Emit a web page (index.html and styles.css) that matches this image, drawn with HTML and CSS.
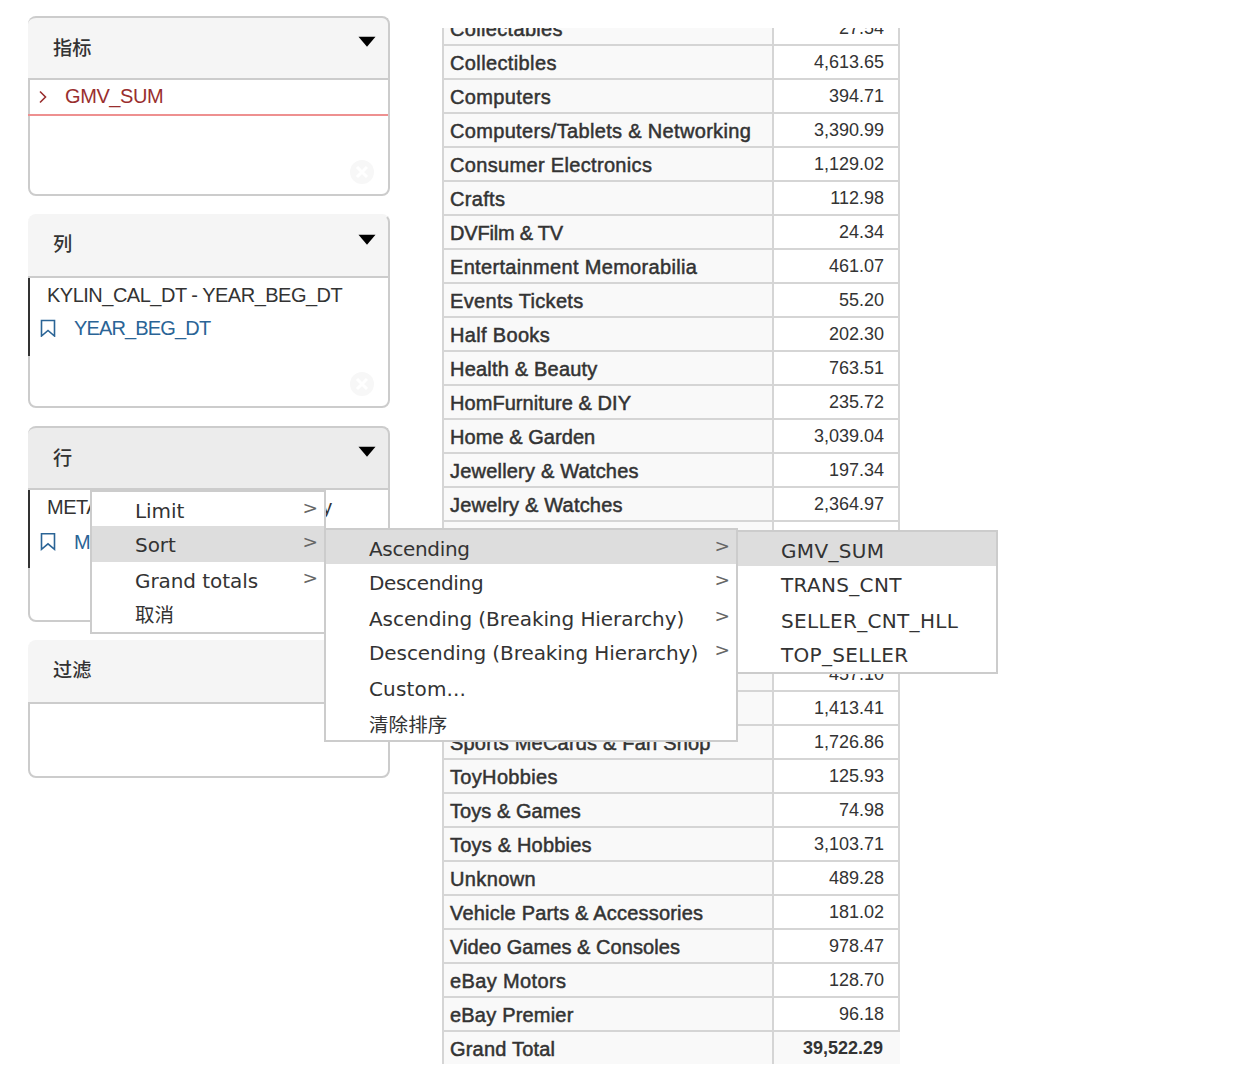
FILE: index.html
```html
<!DOCTYPE html>
<html lang="zh">
<head>
<meta charset="utf-8">
<title>Kylin</title>
<link rel="stylesheet" href="styles.css">
</head>
<body>
<div class="workspace">
  <aside class="sidebar">
    <section class="panel panel-measures">
      <header class="panel-head"><h2>指标</h2><svg class="caret" width="18" height="12" viewBox="0 0 18 12"><path d="M0.5 0.800h17L9 10.800z"/></svg></header>
      <div class="panel-body">
        <div class="measure"><svg width="8" height="12" viewBox="0 0 8 12"><path d="M1 1.500l5.500 5.500L1 12.500"/></svg><span>GMV_SUM</span></div>
        <svg class="clear" width="24" height="24" viewBox="0 0 24 24"><circle cx="12" cy="12" r="12"/><path d="M7 7l10 10M17 7L7 17"/></svg>
      </div>
    </section>
    <section class="panel panel-columns">
      <header class="panel-head borderless"><h2>列</h2><svg class="caret" width="18" height="12" viewBox="0 0 18 12"><path d="M0.5 0.800h17L9 10.800z"/></svg></header>
      <div class="panel-body">
        <div class="hierarchy">
          <div class="dimension">KYLIN_CAL_DT - YEAR_BEG_DT</div>
          <div class="level"><svg width="16" height="18" viewBox="0 0 16 18"><path d="M1.5 1.500h13v15.500L8 11.500l-6.500 5.500z"/></svg><span>YEAR_BEG_DT</span></div>
        </div>
        <svg class="clear" width="24" height="24" viewBox="0 0 24 24"><circle cx="12" cy="12" r="12"/><path d="M7 7l10 10M17 7L7 17"/></svg>
      </div>
    </section>
    <section class="panel panel-rows">
      <header class="panel-head active"><h2>行</h2><svg class="caret" width="18" height="12" viewBox="0 0 18 12"><path d="M0.5 0.800h17L9 10.800z"/></svg></header>
      <div class="panel-body">
        <div class="hierarchy">
          <div class="dimension split"><span>META</span><span>y</span></div>
          <div class="level"><svg width="16" height="18" viewBox="0 0 16 18"><path d="M1.5 0.800h13v15.500L8 10.800l-6.500 5.500z"/></svg><span>M</span></div>
        </div>
      </div>
    </section>
    <section class="panel panel-filter">
      <header class="panel-head borderless"><h2>过滤</h2></header>
      <div class="panel-body"></div>
    </section>
  </aside>

  <main class="results">
    <table>
      <tbody>
        <tr><th>Collectables</th><td>27.54</td></tr>
        <tr><th class="loose">Collectibles</th><td>4,613.65</td></tr>
        <tr><th class="loose">Computers</th><td>394.71</td></tr>
        <tr><th>Computers/Tablets &amp; Networking</th><td>3,390.99</td></tr>
        <tr><th>Consumer Electronics</th><td>1,129.02</td></tr>
        <tr><th>Crafts</th><td>112.98</td></tr>
        <tr><th class="tight">DVFilm &amp; TV</th><td>24.34</td></tr>
        <tr><th>Entertainment Memorabilia</th><td>461.07</td></tr>
        <tr><th>Events Tickets</th><td>55.20</td></tr>
        <tr><th>Half Books</th><td>202.30</td></tr>
        <tr><th class="snug">Health &amp; Beauty</th><td>763.51</td></tr>
        <tr><th class="even">HomFurniture &amp; DIY</th><td>235.72</td></tr>
        <tr><th class="even">Home &amp; Garden</th><td>3,039.04</td></tr>
        <tr><th class="snug">Jewellery &amp; Watches</th><td>197.34</td></tr>
        <tr><th class="snug">Jewelry &amp; Watches</th><td>2,364.97</td></tr>
        <tr><th></th><td></td></tr>
        <tr><th></th><td></td></tr>
        <tr><th></th><td></td></tr>
        <tr><th></th><td></td></tr>
        <tr><th></th><td>457.10</td></tr>
        <tr><th></th><td>1,413.41</td></tr>
        <tr><th class="snug">Sports MeCards &amp; Fan Shop</th><td>1,726.86</td></tr>
        <tr><th>ToyHobbies</th><td>125.93</td></tr>
        <tr><th class="even">Toys &amp; Games</th><td>74.98</td></tr>
        <tr><th class="snug">Toys &amp; Hobbies</th><td>3,103.71</td></tr>
        <tr><th class="loose">Unknown</th><td>489.28</td></tr>
        <tr><th class="snug">Vehicle Parts &amp; Accessories</th><td>181.02</td></tr>
        <tr><th class="even">Video Games &amp; Consoles</th><td>978.47</td></tr>
        <tr><th class="loose">eBay Motors</th><td>128.70</td></tr>
        <tr><th class="snug">eBay Premier</th><td>96.18</td></tr>
        <tr class="total"><th class="snug">Grand Total</th><td>39,522.29</td></tr>
      </tbody>
    </table>
  </main>
</div>

<ul class="menu menu-values">
  <li class="selected">GMV_SUM</li>
  <li class="tall">TRANS_CNT</li>
  <li>SELLER_CNT_HLL</li>
  <li class="tall">TOP_SELLER</li>
</ul>
<ul class="menu menu-main">
  <li>Limit<span class="more">&gt;</span></li>
  <li class="selected tall">Sort<span class="more">&gt;</span></li>
  <li class="tall">Grand totals<span class="more">&gt;</span></li>
  <li class="cjk">取消</li>
</ul>
<ul class="menu menu-sort">
  <li class="selected narrow">Ascending<span class="more">&gt;</span></li>
  <li class="tall narrow">Descending<span class="more">&gt;</span></li>
  <li>Ascending (Breaking Hierarchy)<span class="more">&gt;</span></li>
  <li class="tall">Descending (Breaking Hierarchy)<span class="more">&gt;</span></li>
  <li class="tall wide">Custom...</li>
  <li class="cjk">清除排序</li>
</ul>
</body>
</html>
```

FILE: styles.css
```css
* { box-sizing: border-box; }

body {
  margin: 0;
  height: 1086px;
  overflow: hidden;
  background: #fff;
  color: #333;
  font: 20px/24px "Liberation Sans", "Noto Sans CJK SC", sans-serif;
}

.workspace {
  display: flex;
  align-items: flex-start;
  gap: 52px;
  padding: 16px 0 0 28px;
}

/* Sidebar */
.sidebar {
  display: flex;
  flex-direction: column;
  gap: 18px;
  width: 362px;
}

.panel { display: flex; flex-direction: column; }
.panel-measures { height: 180px; }
.panel-columns { height: 194px; }
.panel-rows { height: 196px; }
.panel-filter { height: 138px; }

.panel-head {
  display: flex;
  justify-content: space-between;
  height: 62px;
  padding: 18px 12px 0 25px;
  border: solid #ccc;
  border-width: 2px 2px 0 0;
  border-radius: 8px 8px 0 0;
  background: #f5f5f5;
}
.panel-head h2 {
  margin: 1px 0 0;
  font-size: 19.2px;
  line-height: 24px;
  font-weight: 500;
}
.panel-head.borderless { border-top-color: #f5f5f5; }
.panel-head.borderless h2 { margin-top: -1px; }
.panel-head.active { background: #ececec; }
.caret { fill: #000; }

.panel-body {
  position: relative;
  flex: 1;
  border: 2px solid #ccc;
  border-radius: 0 0 8px 8px;
}

.measure {
  display: flex;
  align-items: center;
  gap: 18px;
  height: 36px;
  margin-left: -2px;
  padding: 0 0 2px 11px;
  border-bottom: 2px solid #ee9090;
  color: #992e2e;
  letter-spacing: -0.4px;
}
.measure svg { overflow: visible; fill: none; stroke: #992e2e; stroke-width: 1.6; }

.hierarchy {
  height: 78px;
  margin-left: -2px;
  padding-top: 5px;
  border-left: 2px solid #333;
}
.dimension { padding-left: 17px; letter-spacing: -0.5px; }
.dimension.split { display: flex; gap: 223px; }
.level {
  display: flex;
  align-items: center;
  gap: 18px;
  padding: 9px 0 0 10px;
  color: #2a6496;
  letter-spacing: -0.85px;
}
.panel-rows .level { padding-top: 11px; }
.level svg { fill: none; stroke: #2a6496; stroke-width: 1.6; }

.clear { position: absolute; right: 14px; bottom: 10px; }
.clear circle { fill: #f7f7f7; }
.clear path { stroke: #fff; stroke-width: 3; }

/* Result table */
.results {
  height: 1036px;
  margin-top: 12px;
  overflow: hidden;
}
table {
  width: 458px;
  margin-top: -16px;
  border-spacing: 0;
  table-layout: fixed;
}
th, td {
  height: 34px;
  padding: 0;
  border-bottom: 2px solid #d5d5d5;
  border-right: 2px solid #d5d5d5;
  white-space: nowrap;
}
th {
  width: 332px;
  padding: 2px 0 0 6px;
  border-left: 2px solid #d5d5d5;
  background: #f9f9f9;
  text-align: left;
  font-weight: 400;
  letter-spacing: 0.33px;
  -webkit-text-stroke: 0.5px #333;
}
th.loose { letter-spacing: 0.38px; }
th.snug { letter-spacing: 0.2px; }
th.even { letter-spacing: 0.06px; }
th.tight { letter-spacing: -0.2px; }
td {
  padding-right: 14px;
  background: #fff;
  text-align: right;
  font-size: 18px;
}
.total td {
  padding-right: 15px;
  border-right-color: #f9f9f9;
  background: #f9f9f9;
  font-weight: 700;
}

/* Context menus */
.menu {
  position: absolute;
  margin: 0;
  padding: 0;
  border: 2px solid #ccc;
  background: #fff;
  list-style: none;
  font: 20px/34px "DejaVu Sans", "Noto Sans CJK SC", sans-serif;
  letter-spacing: -0.07px;
}
.menu-main { left: 90px; top: 490px; width: 236px; height: 144px; }
.menu-sort { left: 324px; top: 528px; width: 414px; height: 214px; }
.menu-values { left: 736px; top: 530px; width: 262px; height: 144px; letter-spacing: 0.33px; }
.menu li {
  display: flex;
  justify-content: space-between;
  height: 34px;
  padding: 2px 6px 0 43px;
  white-space: nowrap;
}
.menu .tall { height: 36px; }
.menu .selected { background: #ddd; }
.menu .narrow { letter-spacing: -0.35px; }
.menu .wide { letter-spacing: 0.15px; }
.menu .cjk { padding-top: 1px; font-size: 19.5px; }
.menu-sort .cjk { padding-top: 3px; letter-spacing: 0.1px; }
.more { line-height: 28px; font-size: 18.5px; letter-spacing: 0; color: #666; }
```
